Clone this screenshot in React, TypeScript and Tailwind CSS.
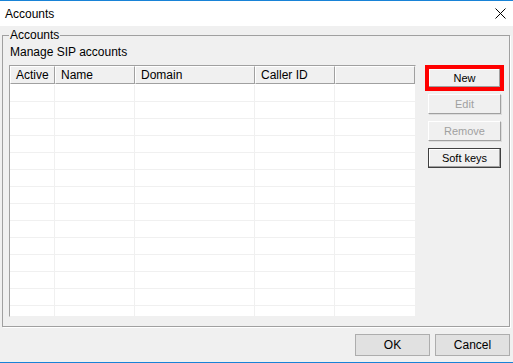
import React from 'react';

const columns = ['Active', 'Name', 'Domain', 'Caller ID', ''];
const rows = Array.from({ length: 14 });

const CloseIcon = () => (
  <svg width="11" height="11" viewBox="0 0 11 11" className="block">
    <path d="M0.5 0.5 L10.5 10.5 M10.5 0.5 L0.5 10.5" stroke="#000" strokeWidth="1" fill="none" />
  </svg>
);

export default function App() {
  return (
    <div className="w-[513px] h-[363px] bg-[#f0f0f0] border-t border-b border-[#1883d7] flex flex-col font-['Liberation_Sans',Arial,sans-serif] text-[12px] text-black overflow-hidden">
      {/* Title bar */}
      <div className="h-[25px] shrink-0 bg-white flex items-center justify-between pl-[5px] pr-[7px]">
        <span className="text-[12px] leading-none">Accounts</span>
        <CloseIcon />
      </div>

      {/* Group box */}
      <fieldset className="ml-[2px] mt-[2px] w-[508px] h-[299px] border border-[#a0a0a0] shadow-[1px_1px_0_#ffffff] pl-[6px] pr-[8px] pb-[8px] flex flex-col">
        <legend className="ml-0 px-[1px] text-[12px] leading-[14px]">Accounts</legend>
        <div className="mt-[3px] leading-[14px] pl-[1px]">Manage SIP accounts</div>

        <div className="mt-[6px] flex gap-[12px] flex-1 min-h-0">
          {/* List view */}
          <div className="w-[407px] h-[252px] bg-white border-l border-t border-[#a0a0a0] border-r border-b border-r-[#f0f0f0] border-b-[#f0f0f0] flex flex-col overflow-hidden">
            <div className="grid grid-cols-[45px_80px_120px_80px_1fr] h-[18px] shrink-0 border-b border-[#808080]">
              {columns.map((c, i) => (
                <div
                  key={i}
                  className="bg-[#f0f0f0] border-t border-l border-white border-r border-b border-r-[#a0a0a0] border-b-[#a0a0a0] pl-[5px] leading-[16px] text-[12px] whitespace-nowrap"
                >
                  {c}
                </div>
              ))}
            </div>
            <div className="pt-[1px] flex-1 overflow-hidden">
              {rows.map((_, r) => (
                <div key={r} className="grid grid-cols-[45px_80px_120px_80px_1fr] h-[17px] border-b border-[#f0f0f0]">
                  {columns.map((_, i) => (
                    <div key={i} className={i < 4 ? 'border-r border-[#f0f0f0]' : ''} />
                  ))}
                </div>
              ))}
            </div>
          </div>

          {/* Buttons */}
          <div className="w-[73px] flex flex-col text-[11px]">
            <button className="mt-[3px] h-[20px] bg-[#f0f0f0] border border-[#696969] shadow-[inset_-1px_-1px_0_#a0a0a0,inset_1px_1px_0_#ffffff] outline outline-[4px] outline-[#ff0000] outline-offset-[-1px] text-[#000]">
              New
            </button>
            <button className="mt-[6px] h-[20px] bg-[#f0f0f0] border border-t-white border-l-white border-r-[#a0a0a0] border-b-[#a0a0a0] shadow-[1px_1px_0_#dcdcdc] text-[#a0a0a0]">
              Edit
            </button>
            <button className="mt-[7px] h-[20px] bg-[#f0f0f0] border border-t-white border-l-white border-r-[#a0a0a0] border-b-[#a0a0a0] shadow-[1px_1px_0_#dcdcdc] text-[#a0a0a0]">
              Remove
            </button>
            <button className="mt-[7px] h-[20px] bg-[#f0f0f0] border border-[#404040] shadow-[inset_-1px_-1px_0_#a0a0a0,inset_1px_1px_0_#ffffff] text-black">
              Soft keys
            </button>
          </div>
        </div>
      </fieldset>

      {/* Dialog buttons */}
      <div className="mt-[7px] flex justify-end gap-[5px] pr-[3px]">
        <button className="w-[75px] h-[22px] bg-[#e1e1e1] border border-[#adadad] text-[12px]">OK</button>
        <button className="w-[75px] h-[22px] bg-[#e1e1e1] border border-[#adadad] text-[12px]">Cancel</button>
      </div>
    </div>
  );
}
